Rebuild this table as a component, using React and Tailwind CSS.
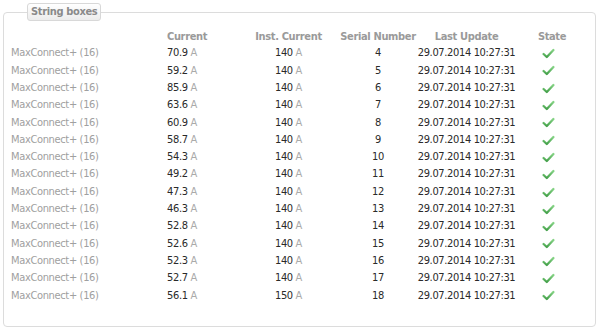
import React from 'react'

const rows = [
  ['70.9', '140', 4],
  ['59.2', '140', 5],
  ['85.9', '140', 6],
  ['63.6', '140', 7],
  ['60.9', '140', 8],
  ['58.7', '140', 9],
  ['54.3', '140', 10],
  ['49.2', '140', 11],
  ['47.3', '140', 12],
  ['46.3', '140', 13],
  ['52.8', '140', 14],
  ['52.6', '140', 15],
  ['52.3', '140', 16],
  ['52.7', '140', 17],
  ['56.1', '150', 18],
]

function Check() {
  return (
    <svg width="13" height="11" viewBox="0 0 13 11" className="inline-block">
      <defs>
        <linearGradient id="g" x1="0" y1="0" x2="0" y2="1">
          <stop offset="0" stopColor="#86d486" />
          <stop offset="1" stopColor="#44a04a" />
        </linearGradient>
      </defs>
      <path d="M1.6 6 L4.8 9 L11.4 2" fill="none" stroke="url(#g)" strokeWidth="2.3" strokeLinecap="round" strokeLinejoin="round" />
    </svg>
  )
}

export default function App() {
  return (
    <div
      className="w-[600px] h-[329px] bg-white pt-[3px] pl-[3px] text-[11px] tracking-[-0.35px]"
      style={{ fontFamily: '"DejaVu Sans Condensed", "DejaVu Sans", sans-serif' }}
    >
      <fieldset className="w-[593px] h-[324px] border border-[#dcdcdc] rounded-[4px] m-0 p-0 min-w-0">
        <legend className="ml-[23px] h-[18px] px-[3px] leading-[16px] border border-[#d8d8d8] rounded-[3px] bg-gradient-to-b from-white to-[#ececec] font-bold text-[#8a8a8a]">
          String boxes
        </legend>

        <div className="pt-[8px]">
          {/* header */}
          <div className="flex h-[16px] items-center pl-[7px] font-bold text-[#9a9a9a]">
            <div className="w-[156px]"></div>
            <div className="w-[80px]">Current</div>
            <div className="w-[83px] text-center">Inst. Current</div>
            <div className="w-[96px] text-center">Serial Number</div>
            <div className="w-[81px] flex justify-center whitespace-nowrap">Last Update</div>
            <div className="w-[88px] text-center pl-[2px]">State</div>
          </div>

          {rows.map(([cur, inst, serial]) => (
            <div key={serial} className="flex h-[17.3px] items-center pl-[7px] text-[#2a2a2a]">
              <div className="w-[156px] text-[#a0a0a0]">MaxConnect+ (16)</div>
              <div className="w-[80px]">
                {cur}<span className="text-[#aaaaaa]"> A</span>
              </div>
              <div className="w-[83px] text-center">
                {inst}<span className="text-[#aaaaaa]"> A</span>
              </div>
              <div className="w-[96px] text-center">{serial}</div>
              <div className="w-[81px] flex justify-center whitespace-nowrap">
                <span>29.07.2014 10:27:31</span>
              </div>
              <div className="w-[88px] flex justify-center pr-[5px]">
                <Check />
              </div>
            </div>
          ))}
        </div>
      </fieldset>
    </div>
  )
}
